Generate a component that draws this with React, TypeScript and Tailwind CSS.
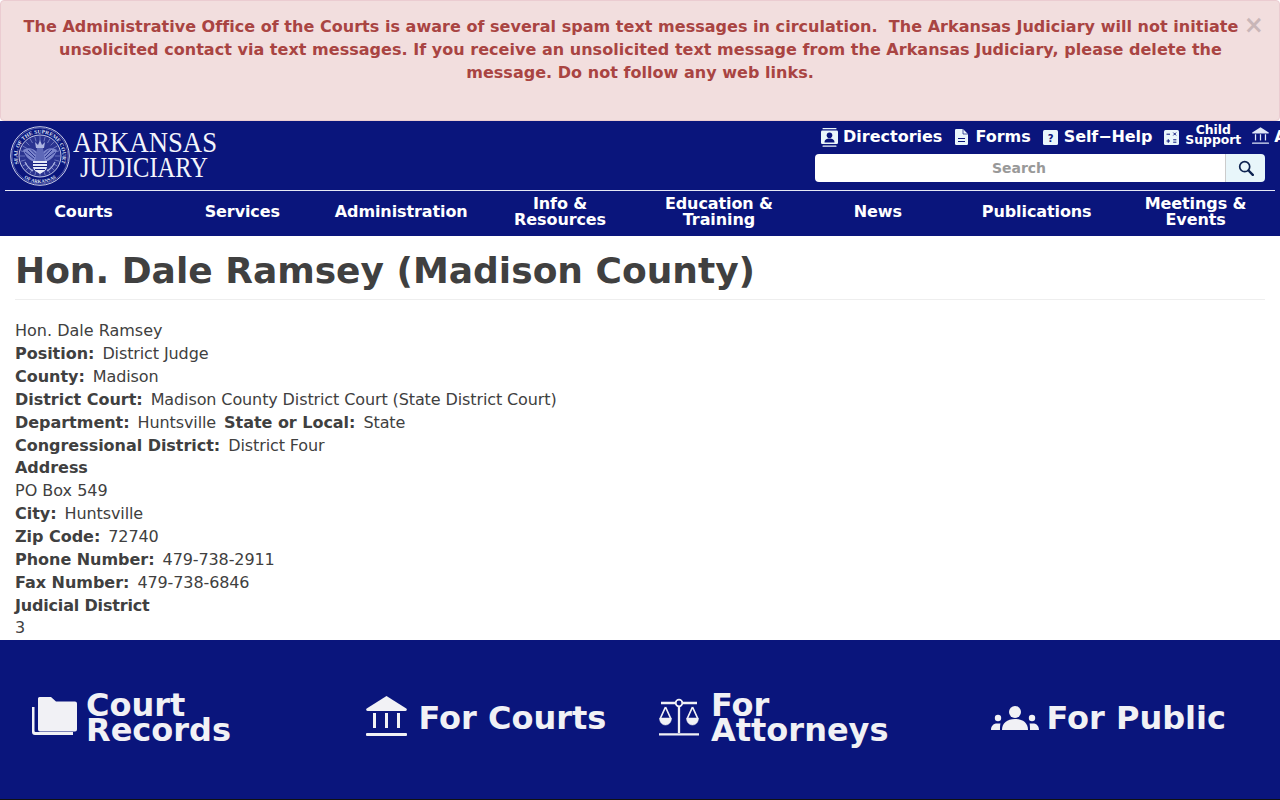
const navItems = [
  ["Courts"],
  ["Services"],
  ["Administration"],
  ["Info &", "Resources"],
  ["Education &", "Training"],
  ["News"],
  ["Publications"],
  ["Meetings &", "Events"],
];

function Seal() {
  const spokes = Array.from({ length: 24 }, (_, i) => i * 15);
  return (
    <svg viewBox="0 0 60 60" className="w-[60px] h-[60px] shrink-0">
      <defs>
        <path id="sealTop" d="M8.900 37.700A22.500 22.500 0 1 1 51.100 37.700" />
        <path id="sealBottom" d="M12.600 50.700A27 27 0 0 0 47.400 50.700" />
      </defs>
      <circle cx="30" cy="30" r="29.300" fill="none" stroke="#e4e7f6" strokeWidth="0.900" />
      <circle cx="30" cy="30" r="28" fill="none" stroke="#9aa3dc" strokeWidth="0.500" />
      <circle cx="30" cy="30" r="21" fill="#2a3390" stroke="#d5d9f0" strokeWidth="0.900" />
      <text fontSize="5.400" fontWeight="700" fill="#dfe3f5" fontFamily="'Liberation Serif', serif">
        <textPath href="#sealTop" textLength="86" lengthAdjust="spacingAndGlyphs">SEAL OF THE SUPREME COURT</textPath>
      </text>
      <text fontSize="5" fontWeight="700" fill="#dfe3f5" fontFamily="'Liberation Serif', serif">
        <textPath href="#sealBottom" startOffset="2" textLength="34" lengthAdjust="spacingAndGlyphs">OF ARKANSAS</textPath>
      </text>
      {spokes.map((a) => (
        <line key={a} x1="30" y1="10" x2="30" y2="15" stroke="#8f98d6" strokeWidth="0.600" transform={`rotate(${a} 30 30)`} />
      ))}
      <path d="M30 14l2 5 3-3-1 6h-8l-1-6 3 3z" fill="#aeb5e2" />
      <path d="M13 24c5-3 10-2 14 2l-1 9c-5 1-10-3-13-11zM47 24c-5-3-10-2-14 2l1 9c5 1 10-3 13-11z" fill="#7c85cc" />
      <path d="M15 26l9 7M18 24l7 7M21 23.500l5 5M45 26l-9 7M42 24l-7 7M39 23.500l-5 5" stroke="#141e80" strokeWidth="0.800" />
      <path d="M27 22h6l2 14H25z" fill="#5e68b8" />
      <path d="M23 35h14v6c0 3-4 5-7 7-3-2-7-4-7-7z" fill="#e6e9f8" />
      <path d="M23 37.500h14M23 40.500h14M25 43.500h10" stroke="#141e80" strokeWidth="1" />
      <path d="M15 36c2 4 4 7 8 9M45 36c-2 4-4 7-8 9" stroke="#aeb5e2" strokeWidth="1.200" fill="none" />
    </svg>
  );
}

function Wordmark() {
  return (
    <svg viewBox="0 0 146 54" className="w-[146px] h-[54px] shrink-0" fill="#f3f4fb" fontFamily="'Liberation Serif', serif" fontSize="29">
      <text x="0" y="24" textLength="144" lengthAdjust="spacingAndGlyphs">ARKANSAS</text>
      <text x="7" y="49" textLength="128" lengthAdjust="spacingAndGlyphs">JUDICIARY</text>
    </svg>
  );
}

function DirectoryIcon() {
  return (
    <svg viewBox="0 0 17 19" className="w-[17px] h-[19px]" fill="#eaf6fb">
      <rect x="1.500" y="0" width="14" height="1.300" rx="0.500" />
      <rect x="0" y="2.500" width="17" height="13.500" rx="1.200" />
      <rect x="1.500" y="17.400" width="14" height="1.300" rx="0.500" />
      <circle cx="8.500" cy="7.300" r="2.800" fill="#0a157c" />
      <path d="M3.500 14.500c0-3 2.200-4 5-4s5 1 5 4z" fill="#0a157c" />
    </svg>
  );
}

function FormIcon() {
  return (
    <svg viewBox="0 0 13 16" className="w-[13px] h-[16px]" fill="#eaf6fb">
      <path d="M1.200 0H8l5 5v9.800a1.200 1.200 0 0 1-1.200 1.200H1.200A1.200 1.200 0 0 1 0 14.800V1.200A1.200 1.200 0 0 1 1.200 0z" />
      <path d="M3 9.500h7M3 12.500h7" stroke="#0a157c" strokeWidth="1.200" />
      <path d="M8 0v5h5" fill="none" stroke="#0a157c" strokeWidth="0.700" />
    </svg>
  );
}

function HelpIcon() {
  return (
    <svg viewBox="0 0 15 15" className="w-[15px] h-[15px]">
      <rect width="15" height="15" rx="1.500" fill="#eaf6fb" />
      <text x="7.500" y="11.500" textAnchor="middle" fontSize="10" fontWeight="700" fill="#0a157c" fontFamily="'DejaVu Sans', sans-serif">?</text>
    </svg>
  );
}

function CalcIcon() {
  return (
    <svg viewBox="0 0 15 15" className="w-[15px] h-[15px]">
      <rect width="15" height="15" rx="1.500" fill="#eaf6fb" />
      <path d="M2.500 4.200h3.500M9.300 2.600l2.800 2.800M12.100 2.600L9.300 5.400M2.500 11h3.500M4.250 9.200v3.600M9.200 9.800h3.200M9.200 12.200h3.200" stroke="#0a157c" strokeWidth="1" />
    </svg>
  );
}

function BankIcon({ className }: { className: string }) {
  return (
    <svg viewBox="0 0 41 40" className={className} fill="currentColor">
      <path d="M20.500 0L40.300 12.500c1 .7.500 2.500-.8 2.500h-38c-1.300 0-1.800-1.800-.8-2.500z" />
      <rect x="7" y="17" width="3" height="15" />
      <rect x="19" y="17" width="3" height="15" />
      <rect x="31" y="17" width="3" height="15" />
      <rect x="0" y="37" width="41" height="3" rx="1" />
    </svg>
  );
}

function FolderIcon() {
  return (
    <svg viewBox="0 0 45 38" className="w-[45px] h-[38px]" fill="currentColor">
      <path d="M6 1.500A1.500 1.500 0 0 1 7.500 0H19l5 4.500h19A2 2 0 0 1 45 6.500V32.500a2 2 0 0 1-2 2H8a2 2 0 0 1-2-2z" />
      <path d="M0 10h2.500V34a1 1 0 0 0 1 1H41v3H3a3 3 0 0 1-3-3z" />
    </svg>
  );
}

function ScaleIcon() {
  return (
    <svg viewBox="0 0 40 38" className="w-[40px] h-[38px]" fill="none" stroke="currentColor">
      <circle cx="20" cy="5" r="3.300" strokeWidth="1.800" />
      <path d="M2 5h14.700M23.300 5H38M20 8.500V35M0 36.300h40" strokeWidth="2.300" />
      <path d="M6.500 9L1.500 20M6.500 9l5 11M33.500 9l-5 11M33.500 9l5 11" strokeWidth="1.700" />
      <path d="M.5 20h12c0 4-2.500 7-6 7s-6-3-6-7zM27.500 20h12c0 4-2.500 7-6 7s-6-3-6-7z" fill="currentColor" strokeWidth="0.500" />
    </svg>
  );
}

function PeopleIcon() {
  return (
    <svg viewBox="0 0 48 24" className="w-[48px] h-[24px]" fill="currentColor">
      <circle cx="24" cy="6" r="6" />
      <path d="M11 24c0-7 5-11 13-11s13 4 13 11z" />
      <circle cx="7" cy="12" r="3.200" />
      <path d="M0 24c0-3.500 2-6 5-6.500h4.500C9 19 9 21.500 9 24z" />
      <circle cx="41" cy="12" r="3.200" />
      <path d="M48 24c0-3.500-2-6-5-6.500h-4.500C39 19 39 21.500 39 24z" />
    </svg>
  );
}

function SearchIcon() {
  return (
    <svg viewBox="0 0 16 16" className="w-[16px] h-[16px]" fill="none" stroke="#0d2350">
      <circle cx="6.700" cy="6.700" r="5" strokeWidth="1.700" />
      <path d="M10.500 10.500l4.300 4.300" strokeWidth="2.400" strokeLinecap="round" />
    </svg>
  );
}

function TopLink({ icon, children, className }: { icon: React.ReactNode; children: React.ReactNode; className?: string }) {
  return (
    <a className={`flex items-center shrink-0 whitespace-nowrap ${className}`}>
      {icon}
      {children}
    </a>
  );
}

function Field({ label, value }: { label: string; value: string }) {
  return (
    <>
      <b className="font-bold mr-[8px] tracking-[-0.03px]">{label}</b>
      <span className="tracking-[-0.11px]">{value}</span>
    </>
  );
}

export default function App() {
  return (
    <div className="w-[1280px] h-[800px] overflow-hidden bg-white text-[#404040] font-['DejaVu_Sans',sans-serif]">
      <div className="relative h-[121px] bg-[#f2dede] border border-[#ebccd1] rounded-[4px] pt-[14px] px-[15px] text-center text-[16px] leading-[23px] font-bold text-[#a94442] tracking-[0.03px]">
        <p className="whitespace-pre pr-[18px]">The Administrative Office of the Courts is aware of several spam text messages in circulation.  The Arkansas Judiciary will not initiate</p>
        <p className="whitespace-pre pl-[1px]">unsolicited contact via text messages. If you receive an unsolicited text message from the Arkansas Judiciary, please delete the</p>
        <p className="whitespace-pre">message. Do not follow any web links.</p>
        <span className="absolute right-[15px] top-[10px] text-[24px] leading-[28px] font-bold text-[#c9b6b8]">×</span>
      </div>

      <header className="h-[115px] bg-[#0a157c] text-white flex flex-col">
        <div className="h-[69px] flex justify-between pl-[10px]">
          <a className="flex items-start pt-[5px] gap-[3px]">
            <Seal />
            <div className="pt-[2px]"><Wordmark /></div>
          </a>
          <div className="w-[465px] shrink-0 flex flex-col">
            <div className="h-[32px] flex items-center font-bold text-[16px] whitespace-nowrap pl-[6px]">
              <TopLink icon={<DirectoryIcon />} className="gap-[5px] mr-[13px]">Directories</TopLink>
              <TopLink icon={<FormIcon />} className="gap-[7px] mr-[12px]">Forms</TopLink>
              <TopLink icon={<HelpIcon />} className="gap-[6px] mr-[12px] tracking-[-0.1px]">Self−Help</TopLink>
              <TopLink icon={<CalcIcon />} className="gap-[6px] mr-[11px]">
                <span className="text-[12.4px] leading-[10px] text-center block -mt-[5px]">Child<br />Support</span>
              </TopLink>
              <TopLink icon={<BankIcon className="w-[17px] h-[17px] text-[#dfe7f7] -mt-[3px]" />} className="gap-[5px]">Admin</TopLink>
            </div>
            <div className="flex w-[450px] h-[28px] mt-[1px]">
              <div className="flex-1 bg-white rounded-l-[4px] text-center text-[#999] font-bold text-[14px] leading-[28px] pr-[2px]">Search</div>
              <div className="w-[40px] bg-[#e8f6fa] rounded-r-[4px] border-l border-[#ccc] flex items-center justify-center">
                <SearchIcon />
              </div>
            </div>
          </div>
        </div>
        <div className="h-px bg-[#e6e8f5] mx-[5px]" />
        <nav className="flex-1 grid grid-cols-8 pl-[4px] pr-[5px] pb-[4px] items-center text-center font-bold text-[16px] leading-[16px] tracking-[-0.1px]">
          {navItems.map((lines) => (
            <a key={lines[0]} className="block">
              {lines.map((l) => (
                <div key={l}>{l}</div>
              ))}
            </a>
          ))}
        </nav>
      </header>

      <main className="h-[404px] px-[15px] text-[16px] leading-[22.857px]">
        <h1 className="pt-[12px] pb-[5px] border-b border-[#eee] text-[36px] leading-[46px] font-bold">
          Hon. Dale Ramsey (Madison County)
        </h1>
        <div className="pt-[20.3px]">
          <div>Hon. Dale Ramsey</div>
          <div><Field label="Position:" value="District Judge" /></div>
          <div><Field label="County:" value="Madison" /></div>
          <div><Field label="District Court:" value="Madison County District Court (State District Court)" /></div>
          <div>
            <Field label="Department:" value="Huntsville" />
            <span className="ml-[8px]"><Field label="State or Local:" value="State" /></span>
          </div>
          <div><Field label="Congressional District:" value="District Four" /></div>
          <div className="font-bold tracking-[-0.03px]">Address</div>
          <div>PO Box 549</div>
          <div><Field label="City:" value="Huntsville" /></div>
          <div><Field label="Zip Code:" value="72740" /></div>
          <div><Field label="Phone Number:" value="479-738-2911" /></div>
          <div><Field label="Fax Number:" value="479-738-6846" /></div>
          <div className="font-bold tracking-[-0.18px]">Judicial District</div>
          <div>3</div>
        </div>
      </main>

      <footer className="h-[160px] bg-[#0a157c] border-b border-[#111] text-[#f1f1f5] font-bold text-[32px] leading-[25px] grid grid-cols-4 px-[15px] pt-[51px]">
        <a className="flex items-start gap-[9px] pl-[17px] pt-[4px]">
          <div className="pt-[2px]"><FolderIcon /></div>
          <span className="-mt-[2px]">Court<br />Records</span>
        </a>
        <a className="flex items-start gap-[12px] pl-[38px] pt-[5px]">
          <BankIcon className="w-[41px] h-[40px] shrink-0" />
          <span className="pt-[10px]">For Courts</span>
        </a>
        <a className="flex items-start gap-[12px] pl-[19px] pt-[4px]">
          <div className="pt-[3px]"><ScaleIcon /></div>
          <span className="-mt-[2px]">For<br />Attorneys</span>
        </a>
        <a className="flex items-start gap-[8px] pl-[38px] pt-[5px]">
          <div className="pt-[10px]"><PeopleIcon /></div>
          <span className="pt-[10px]">For Public</span>
        </a>
      </footer>
    </div>
  );
}
